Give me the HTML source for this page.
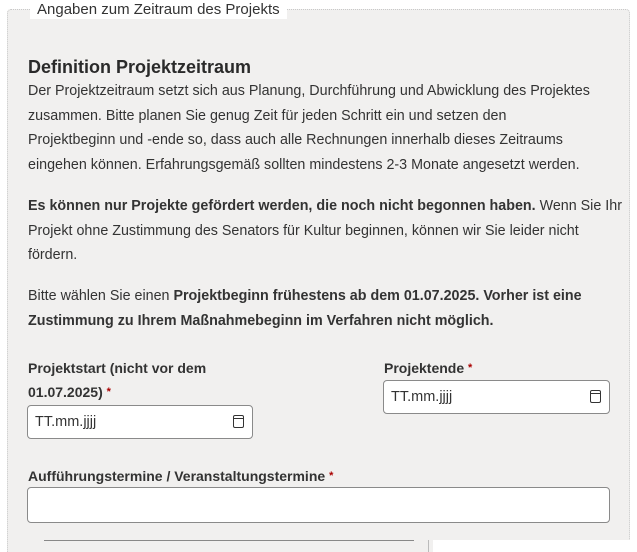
<!DOCTYPE html>
<html><head><style>
html,body{margin:0;width:637px;height:552px;overflow:hidden}
body{background:#fff;font-family:"Liberation Sans",sans-serif;color:#333;position:relative}
.fs{position:absolute;left:7px;top:9px;width:621px;height:560px;border:1px dotted #c8c8c8;border-radius:4px;background:#f1f0ef}
.lg{position:absolute;left:30px;top:0;background:#fff;padding:0 7px;font-size:15px;color:#333;line-height:18px}
.c{position:absolute;left:28px;width:600px;font-size:14.3px;line-height:24.5px;white-space:nowrap}
h2{position:absolute;left:28px;top:57px;margin:0;font-size:18px;font-weight:bold;color:#2a2a2a}
.lab{position:absolute;font-size:14px;font-weight:bold;line-height:24px;color:#333}
.req{color:#a00;font-size:11px;vertical-align:top}
.in{position:absolute;background:#fff;border:1px solid #8a8a8a;border-radius:4px;box-sizing:border-box;font-size:14.5px;line-height:32px;padding-left:7px}
.cal{position:absolute;right:8px;top:9px;width:9px;height:11px;border:1.5px solid #333;border-radius:2px}
.cal:before{content:"";position:absolute;left:0;right:0;top:2px;border-top:1.5px solid #333}
</style></head><body>
<div class="fs"></div>
<div class="lg" style="top:1px">Angaben zum Zeitraum des Projekts</div>
<h2>Definition Projektzeitraum</h2>
<div class="c" style="top:79px">Der Projektzeitraum setzt sich aus Planung, Durchführung und Abwicklung des Projektes<br>zusammen. Bitte planen Sie genug Zeit für jeden Schritt ein und setzen den<br>Projektbeginn und -ende so, dass auch alle Rechnungen innerhalb dieses Zeitraums<br>eingehen können. Erfahrungsgemäß sollten mindestens 2-3 Monate angesetzt werden.</div>
<div class="c" style="top:194px"><b>Es können nur Projekte gefördert werden, die noch nicht begonnen haben.</b> Wenn Sie Ihr<br>Projekt ohne Zustimmung des Senators für Kultur beginnen, können wir Sie leider nicht<br>fördern.</div>
<div class="c" style="top:284px">Bitte wählen Sie einen <b>Projektbeginn frühestens ab dem 01.07.2025. Vorher ist eine<br>Zustimmung zu Ihrem Maßnahmebeginn im Verfahren nicht möglich.</b></div>
<div class="lab" style="left:28px;top:356px;width:200px">Projektstart (nicht vor dem 01.07.2025) <span class="req">*</span></div>
<div class="in" style="left:27px;top:405px;width:226px;height:34px">TT.mm.jjjj<span class="cal"></span></div>
<div class="lab" style="left:384px;top:356px">Projektende <span class="req">*</span></div>
<div class="in" style="left:383px;top:380px;width:227px;height:34px">TT.mm.jjjj<span class="cal"></span></div>
<div class="lab" style="left:28px;top:464px">Aufführungstermine / Veranstaltungstermine <span class="req">*</span></div>
<div class="in" style="left:27px;top:487px;width:583px;height:36px"></div>
<div style="position:absolute;left:44px;top:540px;width:370px;border-top:1px solid #888"></div>
<div style="position:absolute;left:428px;top:540px;width:1px;height:12px;background:#bbb"></div>
<div style="position:absolute;left:433px;top:540px;width:204px;height:12px;background:#fff"></div>
</body></html>
